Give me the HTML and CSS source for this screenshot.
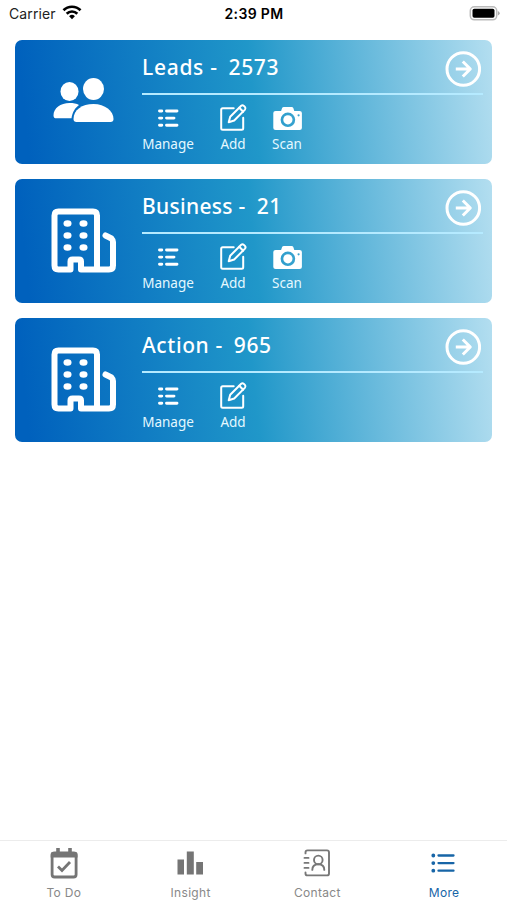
FILE: index.html
```html
<!DOCTYPE html>
<html lang="en">
<head>
<meta charset="utf-8">
<title>More</title>
<link rel="stylesheet" href="styles.css">
</head>
<body>
<svg class="defs" width="0" height="0" aria-hidden="true">
  <symbol id="people" viewBox="0 0 62 46">
    <g fill="#fff"><ellipse cx="16.500" cy="14.5" rx="9" ry="9.5"/>
    <path d="M.5 38.500C.5 31 7.500 26 16.500 26c4 0 7 .6 9.500 2-4 3-6.500 7-7.500 13.300H3.500c-2 0-3-.8-3-2.800z"/>
    <ellipse cx="40.500" cy="12" rx="10.500" ry="11"/>
    <path d="M20.500 42c0-9 8.500-15 20-15s20 7 20 15c0 2-1 3-3 3h-34c-2 0-3-1-3-3z"/></g>
  </symbol>
  <symbol id="building" viewBox="0 0 66 66">
    <g fill="none" stroke="#fff" stroke-width="6" stroke-linecap="round" stroke-linejoin="round">
    <path d="M46 61.500V7.500q0-4-4-4H7.500q-4 0-4 4v50q0 4 4 4h12v-8q0-2 2-2h6.500q2 0 2 2v8h28q4 0 4-4V34q0-2-1.500-3.500L54.500 27.500"/></g>
    <g fill="#fff"><ellipse cx="16.500" cy="15.500" rx="4" ry="3.200"/><ellipse cx="32.500" cy="15.500" rx="4" ry="3.200"/><ellipse cx="16.500" cy="27.500" rx="4" ry="3.200"/><ellipse cx="32.500" cy="27.500" rx="4" ry="3.200"/><ellipse cx="16.500" cy="39.500" rx="4" ry="3.200"/><ellipse cx="32.500" cy="39.500" rx="4" ry="3.200"/></g>
  </symbol>
  <symbol id="arrow" viewBox="0 0 36 36">
    <g fill="none" stroke="#fff" stroke-width="3" stroke-linejoin="round"><circle cx="18.300" cy="18" r="16.300"/><path d="M10.800 18h14.500M17.800 10.500l7.500 7.500-7.500 7.500"/></g>
  </symbol>
  <symbol id="manage" viewBox="0 0 30 30">
    <path d="M6.500 8h2.300M6.500 15.100h2.300M6.500 22.300h2.300M13.500 8h10.500M13.500 15.100h7.500M13.500 22.300h10.500" fill="none" stroke="#fff" stroke-width="2.900" stroke-linecap="round"/>
  </symbol>
  <symbol id="edit" viewBox="0 0 30 30">
    <g transform="translate(.7 .2)" fill="none" stroke="#fff" stroke-width="2" stroke-linejoin="round" stroke-linecap="round"><path d="M15 5H4Q2.500 5 2.500 6.500v18.500q0 1.500 1.500 1.500h19q1.500 0 1.500-1.500V14.500"/><path d="M10 19l1.500-5.500L22.500 2.500q1.300-1 2.700.2l1 1q1.200 1.400.1 2.700L15.500 17.300z"/><path d="M20.500 4.500l4 4"/></g>
  </symbol>
  <symbol id="camera" viewBox="0 0 30 30">
    <g transform="translate(.6 0)"><path fill="#fff" fill-rule="evenodd" d="M3 8h5.500l1-3Q10 4 11.300 4h7.700q1.300 0 1.700 1l1 3H27q2.300 0 2.300 2V25q0 2-2.300 2H3Q.7 27 .7 25V10Q.7 8 3 8zM15.300 9.500a7.300 7.300 0 1 0 0 14.600 7.300 7.300 0 0 0 0-14.600zM26 11.200a1.100 1.100 0 1 0 0 2.200 1.100 1.100 0 0 0 0-2.200z"/>
    <circle cx="15.300" cy="16.800" r="4.600" fill="#fff"/></g>
  </symbol>
</svg>

<div class="screen">
  <header class="status">
    <div class="carrier"><span>Carrier</span>
      <svg width="20" height="16" viewBox="0 0 20 16"><g fill="none" stroke="#000" stroke-width="2.700"><path d="M1.500 5.300a12 12 0 0 1 17 0"/><path d="M4.700 8.700a7.500 7.500 0 0 1 10.600 0"/></g><path d="M10 14.300l-2.900-3a4.100 4.100 0 0 1 5.800 0z"/></svg>
    </div>
    <div class="time">2:39 PM</div>
    <div class="battery"><svg width="31" height="15" viewBox="0 0 31 15"><rect x="1.300" y=".8" width="26.400" height="13" rx="4" fill="#fff" stroke="#bbb" stroke-width="1.500"/><rect x="3.500" y="2.800" width="22" height="9" rx="1.800"/><path d="M28.900 5q1.800.8 1.800 2.300t-1.800 2.300z" fill="#aaa"/></svg></div>
  </header>

  <main class="cards">
    <section class="card">
      <div class="emblem"><svg class="people" width="62" height="46"><use href="#people"/></svg></div>
      <div class="body">
        <div class="head"><h2><span class="leads">Leads -</span><span class="count">2573</span></h2><svg width="36" height="36"><use href="#arrow"/></svg></div>
        <div class="actions">
          <div class="action manage"><svg width="30" height="30"><use href="#manage"/></svg><span>Manage</span></div>
          <div class="action add"><svg width="30" height="30"><use href="#edit"/></svg><span>Add</span></div>
          <div class="action scan"><svg width="30" height="30"><use href="#camera"/></svg><span>Scan</span></div>
        </div>
      </div>
    </section>
    <section class="card">
      <div class="emblem"><svg width="66" height="66"><use href="#building"/></svg></div>
      <div class="body">
        <div class="head"><h2><span class="business">Business -</span><span class="count">21</span></h2><svg width="36" height="36"><use href="#arrow"/></svg></div>
        <div class="actions">
          <div class="action manage"><svg width="30" height="30"><use href="#manage"/></svg><span>Manage</span></div>
          <div class="action add"><svg width="30" height="30"><use href="#edit"/></svg><span>Add</span></div>
          <div class="action scan"><svg width="30" height="30"><use href="#camera"/></svg><span>Scan</span></div>
        </div>
      </div>
    </section>
    <section class="card">
      <div class="emblem"><svg width="66" height="66"><use href="#building"/></svg></div>
      <div class="body">
        <div class="head"><h2><span class="act">Action -</span><span class="count">965</span></h2><svg width="36" height="36"><use href="#arrow"/></svg></div>
        <div class="actions">
          <div class="action manage"><svg width="30" height="30"><use href="#manage"/></svg><span>Manage</span></div>
          <div class="action add"><svg width="30" height="30"><use href="#edit"/></svg><span>Add</span></div>
        </div>
      </div>
    </section>
  </main>

  <nav class="tabs">
    <div class="tab"><svg width="32" height="34" viewBox="0 0 32 34"><path d="M10 1v5M22 1v5" stroke="#757575" stroke-width="3.600"/><rect x="4.100" y="6" width="24" height="24" rx="2.500" fill="none" stroke="#757575" stroke-width="2.800"/><path d="M2.700 7q0-2 2-2h22.800q2 0 2 2v3.500H2.700z" fill="#757575"/><path d="M10 19.500l4 4L22 15" fill="none" stroke="#757575" stroke-width="2.800"/></svg><span>To Do</span></div>
    <div class="tab"><svg width="32" height="34" viewBox="0 0 32 34"><path d="M2.500 12.500H9v15H2.500zM11.800 4.500h7v23h-7zM21.200 15H28v12.500h-6.800z" fill="#757575"/></svg><span>Insight</span></div>
    <div class="tab"><svg width="32" height="34" viewBox="0 0 32 34"><g transform="translate(0 -.6)" fill="none" stroke="#777" stroke-width="1.900" stroke-linecap="round" stroke-linejoin="round"><path d="M4.500 7V6q0-2 2-2H26q2 0 2 2v21q0 2-2 2H6.500q-2 0-2-2v-1M3.500 11.500h4M3.500 16.500h4M3.500 21.500h4"/><circle cx="17.300" cy="13.500" r="4.300"/><path d="M11.300 23.500q0-5.700 6-5.700t6 5.700"/></g></svg><span>Contact</span></div>
    <div class="tab active"><svg width="32" height="34" viewBox="0 0 32 34"><g fill="none" stroke="#1765a7" stroke-linecap="round"><path d="M10.500 8.500h15M10.500 16.100h15M10.500 23.700h15" stroke-width="2.300"/><path d="M5.300 8.500h.01M5.300 16.100h.01M5.300 23.700h.01" stroke-width="3.800"/></g></svg><span>More</span></div>
  </nav>
</div>
</body>
</html>
```
FILE: styles.css
```css
* { box-sizing: border-box; }
body { margin: 0; background: #fff; font-family: Inter, "Liberation Sans", sans-serif; }
svg { display: block; flex: none; }
.defs { position: absolute; }
.screen { width: 507px; height: 900px; display: flex; flex-direction: column; overflow: hidden; }

.status { height: 40px; flex: none; display: grid; grid-template-columns: 1fr auto 1fr; align-items: start; padding: 5px 7px 0 9px; font-size: 14px; line-height: 18px; color: #000; }
.carrier { display: flex; gap: 6px; color: #222; letter-spacing: .1px; }
.time { font-weight: 600; letter-spacing: .35px; margin-right: 1px; }
.battery { display: flex; justify-content: flex-end; padding-top: 1px; }

.cards { flex: 1; display: flex; flex-direction: column; gap: 15px; padding: 0 15px; }
.card { height: 124px; display: flex; border-radius: 7px; color: #fff; background: linear-gradient(84deg, #0061bd 3%, #2097c9 50%, #b3def0 100%); font-family: "Noto Sans", sans-serif; }
.emblem { width: 127px; padding: 29px 0 0 36px; }
.people { margin: 8px 0 0 2px; }
.body { width: 341px; }
.head { height: 55px; border-bottom: 2px solid #b5eaff; display: flex; justify-content: space-between; padding: 11px 2px 0 0; }
.head h2 { margin: 0; font-size: 21px; line-height: 33px; font-weight: 500; display: flex; gap: 11px; }
.leads { letter-spacing: .7px; }
.business { letter-spacing: .3px; }
.act { letter-spacing: .6px; }
.count { letter-spacing: .6px; }
.actions { display: flex; padding-top: 8px; }
.action { display: flex; flex-direction: column; align-items: center; font-size: 13.5px; line-height: 23px; color: #e4f8ff; }
.action span { white-space: nowrap; }
.manage { width: 52px; }
.add { width: 30px; margin-left: 24px; }
.scan { width: 32px; margin-left: 23px; }

.tabs { height: 60px; flex: none; display: grid; grid-template-columns: repeat(4, 1fr); border-top: 1px solid #ececec; }
.tab { display: flex; flex-direction: column; align-items: center; padding: 6px 0 0 1px; color: #888; font-size: 12px; line-height: 20px; letter-spacing: .3px; }
.tab span { margin-top: 2px; }
.active { color: #1765a7; }
```
